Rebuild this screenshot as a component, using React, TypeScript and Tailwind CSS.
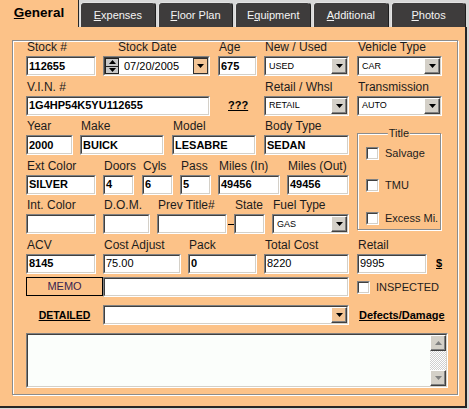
import type { ReactNode } from 'react';

function Sunken({
  className = '',
  inner = 'bg-white',
  children,
}: {
  className?: string;
  inner?: string;
  children?: ReactNode;
}) {
  return (
    <div
      className={`border border-t-[#808080] border-l-[#808080] border-b-white border-r-white ${className}`}
    >
      <div
        className={`flex h-full w-full items-center border border-t-[#404040] border-l-[#404040] border-b-[#d4d0c8] border-r-[#d4d0c8] ${inner}`}
      >
        {children}
      </div>
    </div>
  );
}

const raised =
  'border border-t-white border-l-white border-b-[#404040] border-r-[#404040] bg-[#d4d0c8] shadow-[inset_-1px_-1px_0_#808080]';

function Arrow({ up = false, className = '' }: { up?: boolean; className?: string }) {
  return (
    <svg width="7" height="4" viewBox="0 0 7 4" className={className}>
      <path d={up ? 'M0 4h7L3.5 0z' : 'M0 0h7L3.5 4z'} fill="currentColor" />
    </svg>
  );
}

function Label({ children }: { children?: ReactNode }) {
  return (
    <div className="h-[15px] whitespace-nowrap pl-[1px] text-[12px] leading-[13px] text-[#1c1c1c]">
      {children}
    </div>
  );
}

function Field({
  label,
  value = '',
  className,
  bold = true,
}: {
  label: string;
  value?: string;
  className: string;
  bold?: boolean;
}) {
  return (
    <div className={className}>
      <Label>{label}</Label>
      <Sunken className="h-[20px] w-full">
        <span className={`pl-[1px] text-[11px] leading-none text-black ${bold ? 'font-bold' : ''}`}>
          {value}
        </span>
      </Sunken>
    </div>
  );
}

function Select({
  label,
  value,
  className,
}: {
  label: string;
  value: string;
  className: string;
}) {
  return (
    <div className={className}>
      <Label>{label}</Label>
      <Sunken className="h-[20px] w-full">
        <span className="flex-1 pl-[3px] text-[9px] leading-none text-black">{value}</span>
        <div className={`flex h-full w-[16px] items-center justify-center ${raised}`}>
          <Arrow />
        </div>
      </Sunken>
    </div>
  );
}

function Check({ label, className = '' }: { label: string; className?: string }) {
  return (
    <div className={`flex items-center ${className}`}>
      <Sunken className="h-[13px] w-[13px]" />
      <span className="ml-[6px] text-[11px] leading-none text-[#1c1c1c]">{label}</span>
    </div>
  );
}

function Link({ children, className = '' }: { children: ReactNode; className?: string }) {
  return <span className={`font-bold underline text-black ${className}`}>{children}</span>;
}

const tabs = [
  ['', 'E', 'xpenses'],
  ['', 'F', 'loor Plan'],
  ['E', 'q', 'uipment'],
  ['', 'A', 'dditional'],
  ['', 'P', 'hotos'],
];

function Tabs() {
  return (
    <div className="flex h-[27px] items-end">
      <div className="flex h-[27px] w-[79px] items-center justify-center border-r border-[#262626] bg-[#fcc288] text-[13.5px] font-bold text-black">
        <span className="underline">G</span>eneral
      </div>
      <div className="ml-[1px] flex gap-[2px]">
        {tabs.map(([a, k, b]) => (
          <div
            key={k + b}
            className="flex h-[25.5px] w-[75.7px] items-center justify-center rounded-t-[4px] border-l border-r border-t border-l-[#e4e4e4] border-t-[#e4e4e4] border-r-[#1e1e1e] bg-[#3e3c3c] pt-[1px] text-[11px] text-[#f4f4f4]"
          >
            {a}
            <span className="underline">{k}</span>
            {b}
          </div>
        ))}
      </div>
    </div>
  );
}

function TitleBox() {
  return (
    <div className="relative ml-[8px] mt-[13px] h-[97px] w-[84px] border border-[#8c8c8c] shadow-[1px_1px_0_#fff,inset_1px_1px_0_#fff]">
      <span className="absolute -top-[7px] left-1/2 -translate-x-1/2 bg-[#fcc288] px-[1px] text-[11px] leading-[13px] text-[#1c1c1c]">
        Title
      </span>
      <div className="flex flex-col gap-[19.5px] pl-[8px] pt-[12.5px]">
        <Check label="Salvage" />
        <Check label="TMU" />
        <Check label="Excess Mi." />
      </div>
    </div>
  );
}

export default function App() {
  return (
    <div className="h-[409px] w-[469px] overflow-hidden bg-[#d8d8d8] font-['Liberation_Sans',Arial,sans-serif] text-black">
      <Tabs />
      <div className="h-[381px] w-[467px] border-b-2 border-r-2 border-[#262626] bg-[#fcc288] pl-[12px] pt-[13px]">
        <div className="h-[355px] w-[446px] border border-[#8c8c8c] pl-[13px] shadow-[1px_1px_0_#fff,inset_1px_1px_0_#fff]">
          {/* row 1 */}
          <div className="mb-[4.5px] flex">
            <Field className="w-[70px]" label="Stock #" value="112655" />
            <div className="ml-[7px] w-[107px]">
              <div className="h-[15px] pl-[15px] text-[12px] leading-[13px] text-[#1c1c1c]">Stock Date</div>
              <Sunken className="h-[20px] w-full">
                <div className="flex h-full w-[14px] flex-col">
                  <div className="flex flex-1 items-center justify-center border border-[#202020] bg-[#c8c8c8]">
                    <Arrow up />
                  </div>
                  <div className="flex flex-1 items-center justify-center border border-t-0 border-[#202020] bg-[#c8c8c8]">
                    <Arrow />
                  </div>
                </div>
                <span className="ml-[5px] flex-1 text-[11px] leading-none">07/20/2005</span>
                <div className="flex h-full w-[15px] items-center justify-center border border-[#303030] bg-[#f3c596]">
                  <Arrow />
                </div>
              </Sunken>
            </div>
            <Field className="ml-[8px] w-[39px]" label="Age" value="675" />
            <Select className="ml-[7px] w-[85px]" label="New / Used" value="USED" />
            <Select className="ml-[8px] w-[85px]" label="Vehicle Type" value="CAR" />
          </div>

          {/* row 2 */}
          <div className="mb-[4.5px] flex">
            <Field className="w-[184px]" label="V.I.N. #" value="1G4HP54K5YU112655" />
            <div className="w-[54px]">
              <div className="h-[15px]" />
              <div className="flex h-[20px] items-center pl-[18px]">
                <Link className="text-[11px] leading-none">???</Link>
              </div>
            </div>
            <Select className="w-[85px]" label="Retail / Whsl" value="RETAIL" />
            <Select className="ml-[8px] w-[85px]" label="Transmission" value="AUTO" />
          </div>

          {/* rows 3-5 with Title box */}
          <div className="flex">
            <div className="w-[323px]">
              <div className="mb-[4.5px] flex">
                <Field className="w-[47px]" label="Year" value="2000" />
                <Field className="ml-[7px] w-[84px]" label="Make" value="BUICK" />
                <Field className="ml-[8px] w-[84px]" label="Model" value="LESABRE" />
                <Field className="ml-[8px] w-[85px]" label="Body Type" value="SEDAN" />
              </div>
              <div className="mb-[4.5px] flex">
                <Field className="w-[70px]" label="Ext Color" value="SILVER" />
                <Field className="ml-[7px] w-[31px]" label="Doors" value="4" />
                <Field className="ml-[8px] w-[31px]" label="Cyls" value="6" />
                <Field className="ml-[7px] w-[31px]" label="Pass" value="5" />
                <Field className="ml-[7px] w-[62px]" label="Miles (In)" value="49456" />
                <Field className="ml-[7px] w-[62px]" label="Miles (Out)" value="49456" />
              </div>
              <div className="mb-[4.5px] flex">
                <Field className="w-[70px]" label="Int. Color" />
                <Field className="ml-[7px] w-[47px]" label="D.O.M." />
                <Field className="ml-[7px] w-[70px]" label="Prev Title#" />
                <div className="w-[7px]">
                  <div className="h-[15px]" />
                  <div className="flex h-[20px] items-center justify-center">
                    <div className="h-[1px] w-[6px] bg-black" />
                  </div>
                </div>
                <Field className="w-[31px]" label="State" />
                <Select className="ml-[7px] w-[77px]" label="Fuel Type" value="GAS" />
              </div>
            </div>
            <TitleBox />
          </div>

          {/* row 6 */}
          <div className="flex">
            <Field className="w-[70px]" label="ACV" value="8145" />
            <Field className="ml-[7px] w-[78px]" label="Cost Adjust" value="75.00" bold={false} />
            <Field className="ml-[7px] w-[69px]" label="Pack" value="0" />
            <Field className="ml-[7px] w-[85px]" label="Total Cost" value="8220" bold={false} />
            <Field className="ml-[8px] w-[70px]" label="Retail" value="9995" bold={false} />
            <div className="ml-[9px]">
              <div className="h-[15px]" />
              <div className="flex h-[20px] items-center">
                <Link className="text-[11px] leading-none">$</Link>
              </div>
            </div>
          </div>

          {/* memo row */}
          <div className="mt-[3px] flex">
            <div className="flex h-[19px] w-[77px] items-center justify-center border border-black text-[11px] leading-none text-[#3a2350]">
              MEMO
            </div>
            <Sunken className="h-[20px] w-[246px]" />
            <Check className="ml-[8px] mt-[1px]" label="INSPECTED" />
          </div>

          {/* detailed row */}
          <div className="mt-[8.5px] flex">
            <div className="flex w-[77px] items-center justify-center">
              <Link className="text-[10.5px] leading-none">DETAILED</Link>
            </div>
            <Sunken className="h-[20px] w-[246px]">
              <span className="flex-1" />
              <div className={`flex h-full w-[16px] items-center justify-center ${raised} bg-[#f3c596]`}>
                <Arrow />
              </div>
            </Sunken>
            <div className="ml-[10px] flex items-center">
              <Link className="text-[11px] leading-none">Defects/Damage</Link>
            </div>
          </div>

          {/* notes */}
          <Sunken className="mt-[8px] h-[55px] w-[422px]" inner="bg-[#fbfefb] items-stretch justify-end">
            <div className="flex w-[16px] flex-col">
              <div className={`flex h-[16px] items-center justify-center text-[#808080] ${raised}`}>
                <Arrow up />
              </div>
              <div className="flex-1 bg-[image:repeating-conic-gradient(#ffffff_0%_25%,#cfcfcf_0%_50%)] bg-[length:2px_2px]" />
              <div className={`flex h-[16px] items-center justify-center text-[#808080] ${raised}`}>
                <Arrow />
              </div>
            </div>
          </Sunken>
        </div>
      </div>
    </div>
  );
}
